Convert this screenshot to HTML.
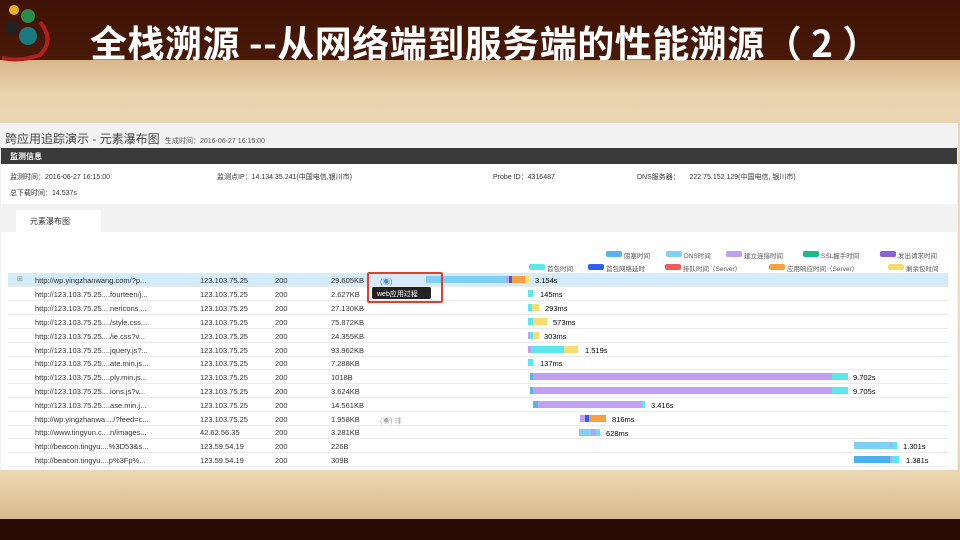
<!DOCTYPE html>
<html><head><meta charset="utf-8"><style>
*{margin:0;padding:0;box-sizing:border-box}
body{width:960px;height:540px;overflow:hidden;position:relative;font-family:"Liberation Sans","Noto Sans CJK SC",sans-serif;background:#2a0a04}
.top{position:absolute;left:0;top:0;width:960px;height:64px;background:linear-gradient(#3e1206,#4a1a08)}
.parch{position:absolute;left:0;top:60px;width:960px;height:460px;background:linear-gradient(180deg,#d9b78a 0%,#ead4b0 8%,#efdcbd 50%,#ecd6b2 90%,#d8b88c 100%)}
.bot{position:absolute;left:0;top:519px;width:960px;height:21px;background:#2a0a05}
h1{position:absolute;left:90px;top:17px;font-size:37px;color:#fff;font-weight:bold;font-family:"Noto Sans CJK SC",sans-serif;letter-spacing:0.5px;line-height:48px;white-space:nowrap}
.panel{position:absolute;left:0;top:123px;width:958px;height:347px;background:#f2f2f2;font-size:7.5px;color:#333}
.abs{position:absolute;white-space:nowrap}
.row{position:absolute;left:8px;width:940px;height:14px;border-bottom:1px solid #eaeaea}
.row span{position:absolute;top:3px;font-size:7.5px;color:#333}
.bar{position:absolute;height:7px}
.lg{position:absolute;width:16px;height:6px;border-radius:2px}
.lt{position:absolute;font-size:6.5px;color:#555}
</style></head><body>
<div class="top"></div>
<div class="parch"></div>
<div class="bot"></div>
<svg style="position:absolute;left:0;top:0" width="60" height="65">
<circle cx="14" cy="10" r="5" fill="#e8b020"/>
<circle cx="28" cy="16" r="7" fill="#2a8a4a"/>
<circle cx="12" cy="28" r="7" fill="#222"/>
<circle cx="28" cy="36" r="9" fill="#1a7a80"/>
<path d="M40 22 Q55 40 40 55 Q20 62 2 58" stroke="#b02020" stroke-width="4" fill="none"/>
</svg>
<h1>全栈溯源 --从网络端到服务端的性能溯源（ 2 ）</h1>
<div class="panel">
<div class="abs" style="left:5px;top:7px;font-size:12px;color:#444">跨应用追踪演示 - 元素瀑布图 <span style="font-size:7px;color:#555">&nbsp;生成时间：2016-06-27 16:15:00</span></div>
<div class="abs" style="left:1px;top:25px;width:956px;height:16px;background:#3a3a3a;color:#fff;font-size:8px;font-weight:bold;padding:3px 9px">监测信息</div>
<div class="abs" style="left:1px;top:41px;width:956px;height:40px;background:#fff"></div>
<div class="abs" style="left:10px;top:49px;font-size:7px">监测时间：2016-06-27 16:15:00</div>
<div class="abs" style="left:217px;top:49px;font-size:7px">监测点IP：14.134.35.241(中国电信,银川市)</div>
<div class="abs" style="left:493px;top:49px;font-size:7px">Probe ID：4316487</div>
<div class="abs" style="left:637px;top:49px;font-size:7px">DNS服务器：&nbsp;&nbsp;&nbsp;&nbsp;&nbsp;222.75.152.129(中国电信, 银川市)</div>
<div class="abs" style="left:10px;top:65px;font-size:7px">总下载时间：14.537s</div>
<div class="abs" style="left:16px;top:87px;width:85px;height:22px;background:#fff;font-size:8px;padding:6px 14px">元素瀑布图</div>
<div class="abs" style="left:1px;top:109px;width:956px;height:238px;background:#fff"></div>

<div class="lg" style="left:606px;top:128px;background:#56b4f0"></div><div class="lt" style="left:624px;top:127px">阻塞时间</div>
<div class="lg" style="left:666px;top:128px;background:#7fd0f6"></div><div class="lt" style="left:684px;top:127px">DNS时间</div>
<div class="lg" style="left:726px;top:128px;background:#c0a0f4"></div><div class="lt" style="left:744px;top:127px">建立连接时间</div>
<div class="lg" style="left:803px;top:128px;background:#1ab88a"></div><div class="lt" style="left:821px;top:127px">SSL握手时间</div>
<div class="lg" style="left:880px;top:128px;background:#9060d8"></div><div class="lt" style="left:898px;top:127px">发出请求时间</div>
<div class="lg" style="left:529px;top:141px;background:#5ae8ee"></div><div class="lt" style="left:547px;top:140px">首包时间</div>
<div class="lg" style="left:588px;top:141px;background:#3060f0"></div><div class="lt" style="left:606px;top:140px">首包网络延时</div>
<div class="lg" style="left:665px;top:141px;background:#f85a5a"></div><div class="lt" style="left:683px;top:140px">排队时间（Server）</div>
<div class="lg" style="left:769px;top:141px;background:#f8a040"></div><div class="lt" style="left:787px;top:140px">应用响应时间（Server）</div>
<div class="lg" style="left:888px;top:141px;background:#f8dc70"></div><div class="lt" style="left:906px;top:140px">剩余包时间</div>

<div class="row" style="top:150px;background:#d4ebfa"><span style="left:9px;top:2px;font-size:7px;color:#888">⊞</span><span style="left:27px">http://wp.yingzhanwang.com/?p...</span><span style="left:192px">123.103.75.25</span><span style="left:267px">200</span><span style="left:323px">29.605KB</span><span style="left:372px;color:#4a8ad0">(◉)</span></div>
<div class="row" style="top:164px"><span style="left:27px">http://123.103.75.25....fourteen/j...</span><span style="left:192px">123.103.75.25</span><span style="left:267px">200</span><span style="left:323px">2.627KB</span></div>
<div class="row" style="top:178px"><span style="left:27px">http://123.103.75.25....nericons....</span><span style="left:192px">123.103.75.25</span><span style="left:267px">200</span><span style="left:323px">27.130KB</span></div>
<div class="row" style="top:192px"><span style="left:27px">http://123.103.75.25..../style.css...</span><span style="left:192px">123.103.75.25</span><span style="left:267px">200</span><span style="left:323px">75.872KB</span></div>
<div class="row" style="top:206px"><span style="left:27px">http://123.103.75.25..../ie.css?v...</span><span style="left:192px">123.103.75.25</span><span style="left:267px">200</span><span style="left:323px">24.355KB</span></div>
<div class="row" style="top:220px"><span style="left:27px">http://123.103.75.25....jquery.js?...</span><span style="left:192px">123.103.75.25</span><span style="left:267px">200</span><span style="left:323px">93.962KB</span></div>
<div class="row" style="top:233px"><span style="left:27px">http://123.103.75.25....ate.min.js...</span><span style="left:192px">123.103.75.25</span><span style="left:267px">200</span><span style="left:323px">7.288KB</span></div>
<div class="row" style="top:247px"><span style="left:27px">http://123.103.75.25....ply.min.js...</span><span style="left:192px">123.103.75.25</span><span style="left:267px">200</span><span style="left:323px">1018B</span></div>
<div class="row" style="top:261px"><span style="left:27px">http://123.103.75.25....ions.js?v...</span><span style="left:192px">123.103.75.25</span><span style="left:267px">200</span><span style="left:323px">3.624KB</span></div>
<div class="row" style="top:275px"><span style="left:27px">http://123.103.75.25....ase.min.j...</span><span style="left:192px">123.103.75.25</span><span style="left:267px">200</span><span style="left:323px">14.561KB</span></div>
<div class="row" style="top:289px"><span style="left:27px">http://wp.yingzhanwa..../?feed=c...</span><span style="left:192px">123.103.75.25</span><span style="left:267px">200</span><span style="left:323px">1.958KB</span><span style="left:372px;color:#aaa">(◉) ⇶</span></div>
<div class="row" style="top:302px"><span style="left:27px">http://www.tingyun.c....n/images...</span><span style="left:192px">42.62.56.35</span><span style="left:267px">200</span><span style="left:323px">3.281KB</span></div>
<div class="row" style="top:316px"><span style="left:27px">http://beacon.tingyu....%3D53&amp;s...</span><span style="left:192px">123.59.54.19</span><span style="left:267px">200</span><span style="left:323px">226B</span></div>
<div class="row" style="top:330px"><span style="left:27px">http://beacon.tingyu....p%3Fp%...</span><span style="left:192px">123.59.54.19</span><span style="left:267px">200</span><span style="left:323px">309B</span></div>
</div>
<div style="position:absolute;left:0;top:0;width:960px;height:540px">
<div class="bar" style="left:426px;top:276px;width:80px;background:#7fd0f6"></div><div class="bar" style="left:506px;top:276px;width:3px;background:#c0a0f4"></div><div class="bar" style="left:509px;top:276px;width:3px;background:#3060f0"></div><div class="bar" style="left:512px;top:276px;width:13px;background:#f8a040"></div><div class="bar" style="left:525px;top:276px;width:4px;background:#f8dc70"></div><div class="abs" style="left:535px;top:276px;font-size:7.5px">3.154s</div>
<div class="bar" style="left:528px;top:290px;width:5px;background:#5ae8ee"></div><div class="abs" style="left:540px;top:290px;font-size:7.5px">145ms</div>
<div class="bar" style="left:528px;top:304px;width:4px;background:#5ae8ee"></div><div class="bar" style="left:532px;top:304px;width:7px;background:#f8dc70"></div><div class="abs" style="left:545px;top:304px;font-size:7.5px">293ms</div>
<div class="bar" style="left:528px;top:318px;width:5px;background:#5ae8ee"></div><div class="bar" style="left:533px;top:318px;width:14px;background:#f8dc70"></div><div class="abs" style="left:553px;top:318px;font-size:7.5px">573ms</div>
<div class="bar" style="left:528px;top:332px;width:2px;background:#c0a0f4"></div><div class="bar" style="left:530px;top:332px;width:3px;background:#5ae8ee"></div><div class="bar" style="left:533px;top:332px;width:6px;background:#f8dc70"></div><div class="abs" style="left:544px;top:332px;font-size:7.5px">303ms</div>
<div class="bar" style="left:528px;top:346px;width:3px;background:#c0a0f4"></div><div class="bar" style="left:531px;top:346px;width:33px;background:#5ae8ee"></div><div class="bar" style="left:564px;top:346px;width:14px;background:#f8dc70"></div><div class="abs" style="left:585px;top:346px;font-size:7.5px">1.519s</div>
<div class="bar" style="left:528px;top:359px;width:5px;background:#5ae8ee"></div><div class="abs" style="left:540px;top:359px;font-size:7.5px">137ms</div>
<div class="bar" style="left:530px;top:373px;width:3px;background:#56b4f0"></div><div class="bar" style="left:533px;top:373px;width:299px;background:#c0a0f4"></div><div class="bar" style="left:832px;top:373px;width:16px;background:#5ae8ee"></div><div class="abs" style="left:853px;top:373px;font-size:7.5px">9.702s</div>
<div class="bar" style="left:530px;top:387px;width:3px;background:#56b4f0"></div><div class="bar" style="left:533px;top:387px;width:299px;background:#c0a0f4"></div><div class="bar" style="left:832px;top:387px;width:16px;background:#5ae8ee"></div><div class="abs" style="left:853px;top:387px;font-size:7.5px">9.705s</div>
<div class="bar" style="left:533px;top:401px;width:5px;background:#56b4f0"></div><div class="bar" style="left:538px;top:401px;width:104px;background:#c0a0f4"></div><div class="bar" style="left:642px;top:401px;width:3px;background:#5ae8ee"></div><div class="abs" style="left:651px;top:401px;font-size:7.5px">3.416s</div>
<div class="bar" style="left:580px;top:415px;width:5px;background:#c0a0f4"></div><div class="bar" style="left:585px;top:415px;width:4px;background:#3060f0"></div><div class="bar" style="left:589px;top:415px;width:17px;background:#f8a040"></div><div class="abs" style="left:612px;top:415px;font-size:7.5px">816ms</div>
<div class="bar" style="left:579px;top:429px;width:12px;background:#7fd0f6"></div><div class="bar" style="left:591px;top:429px;width:5px;background:#c0a0f4"></div><div class="bar" style="left:596px;top:429px;width:4px;background:#5ae8ee"></div><div class="abs" style="left:606px;top:429px;font-size:7.5px">628ms</div>
<div class="bar" style="left:854px;top:442px;width:36px;background:#7fd0f6"></div><div class="bar" style="left:890px;top:442px;width:2px;background:#c0a0f4"></div><div class="bar" style="left:892px;top:442px;width:5px;background:#5ae8ee"></div><div class="abs" style="left:903px;top:442px;font-size:7.5px">1.301s</div>
<div class="bar" style="left:854px;top:456px;width:36px;background:#4ab0f0"></div><div class="bar" style="left:890px;top:456px;width:2px;background:#c0a0f4"></div><div class="bar" style="left:892px;top:456px;width:7px;background:#5ae8ee"></div><div class="abs" style="left:906px;top:456px;font-size:7.5px">1.381s</div>
<div class="abs" style="left:367px;top:272px;width:76px;height:31px;border:2px solid #e04030;border-radius:2px"></div>
<div class="abs" style="left:372px;top:287px;width:59px;height:12px;background:#222;color:#fff;font-size:7px;padding:2px 5px;border-radius:2px">web应用过程</div>
</div>
</body></html>
